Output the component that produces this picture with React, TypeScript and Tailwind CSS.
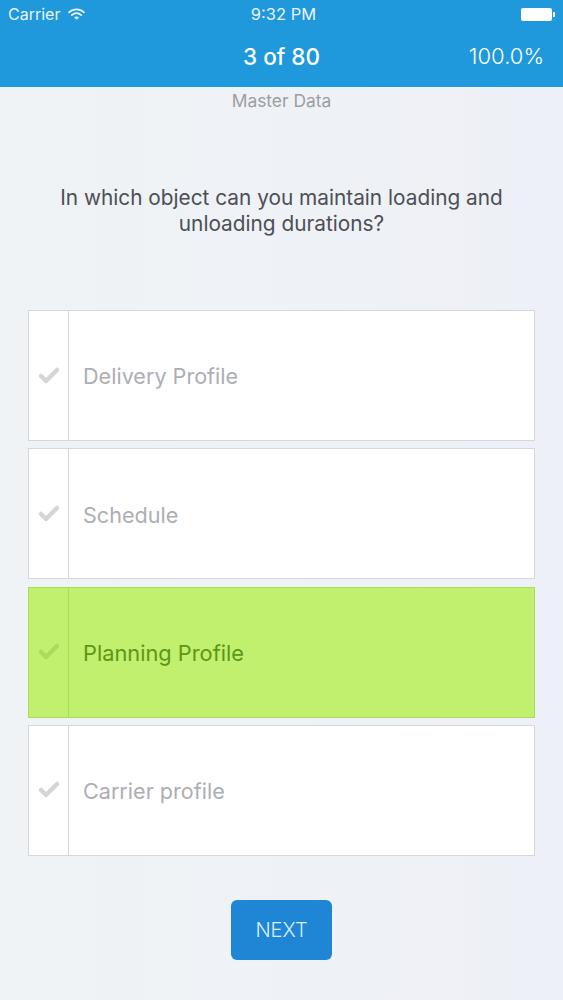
import { Check } from "lucide-react";

const answers = [
  { label: "Delivery Profile", selected: false },
  { label: "Schedule", selected: false },
  { label: "Planning Profile", selected: true },
  { label: "Carrier profile", selected: false },
];

function Wifi() {
  return (
    <svg width="17" height="13" viewBox="0 0 16 12" fill="none" stroke="#e8f4fc" strokeWidth="1.7" strokeLinecap="round">
      <path d="M1 4 C5 0.2 11 0.2 15 4" />
      <path d="M3.6 6.6 C6.2 4.2 9.8 4.2 12.4 6.6" />
      <path d="M8 10.5 L6 8.8 C7.2 7.8 8.8 7.8 10 8.8 Z" fill="#e8f4fc" strokeWidth="0.5" />
    </svg>
  );
}

export default function App() {
  return (
    <div className="w-[563px] h-[1000px] flex flex-col bg-gradient-to-r from-[#eff3f5] to-[#eef0f7] font-['Inter','Liberation_Sans',sans-serif] overflow-hidden">
      <div className="h-[87px] bg-[#1f98dc] text-white flex flex-col shrink-0">
        <div className="h-[28px] px-[8px] grid grid-cols-3 items-center text-[16.5px] text-[#e8f4fc]">
          <div className="flex items-center gap-[8px] text-[16px]">
            <span>Carrier</span>
            <Wifi />
          </div>
          <div className="text-center whitespace-nowrap pl-[4px]">9:32 PM</div>
          <div className="flex justify-end items-center">
            <div className="w-[31px] h-[13px] bg-white rounded-[2px]" />
            <div className="w-[2px] h-[5px] bg-white rounded-r-[1px] ml-[1px]" />
          </div>
        </div>
        <div className="relative flex-1 flex items-center justify-center pb-[2px]">
          <span className="text-[22.5px] font-medium">3 of 80</span>
          <span className="absolute right-[19px] text-[22px] font-light">100.0%</span>
        </div>
      </div>

      <div className="text-center text-[17.4px] text-[#9b9ea3] mt-[4px] leading-[20px]">Master Data</div>

      <h1 className="mt-[74px] px-[40px] text-center text-[20.8px] leading-[26px] text-[#4c4f54] font-normal">
        In which object can you maintain loading and unloading durations?
      </h1>

      <div className="mt-[73px] mx-[28px] flex flex-col gap-[7.33px]">
        {answers.map((a) => (
          <div
            key={a.label}
            className={`h-[131px] flex border ${
              a.selected ? "bg-[#c1f06f] border-[#a9dc5c]" : "bg-white border-[#d5d7da]"
            }`}
          >
            <div
              className={`w-[40px] flex items-center justify-center border-r ${
                a.selected ? "border-[#a9dc5c]" : "border-[#d5d7da]"
              }`}
            >
              <Check
                size={24}
                strokeWidth={4.5}
                className={a.selected ? "text-[#a9dc5c]" : "text-[#d4d5d7]"}
              />
            </div>
            <div
              className={`pl-[14px] pt-[2px] flex items-center text-[21.6px] ${
                a.selected ? "text-[#5f9516] text-[21.8px]" : "text-[#acaeb3]"
              }`}
            >
              {a.label}
            </div>
          </div>
        ))}
      </div>

      <div className="mt-[44px] flex justify-center">
        <button className="w-[101px] h-[60px] rounded-[6px] bg-[#1f86d6] text-[#d9f0ff] text-[20px] font-light">
          NEXT
        </button>
      </div>
    </div>
  );
}
